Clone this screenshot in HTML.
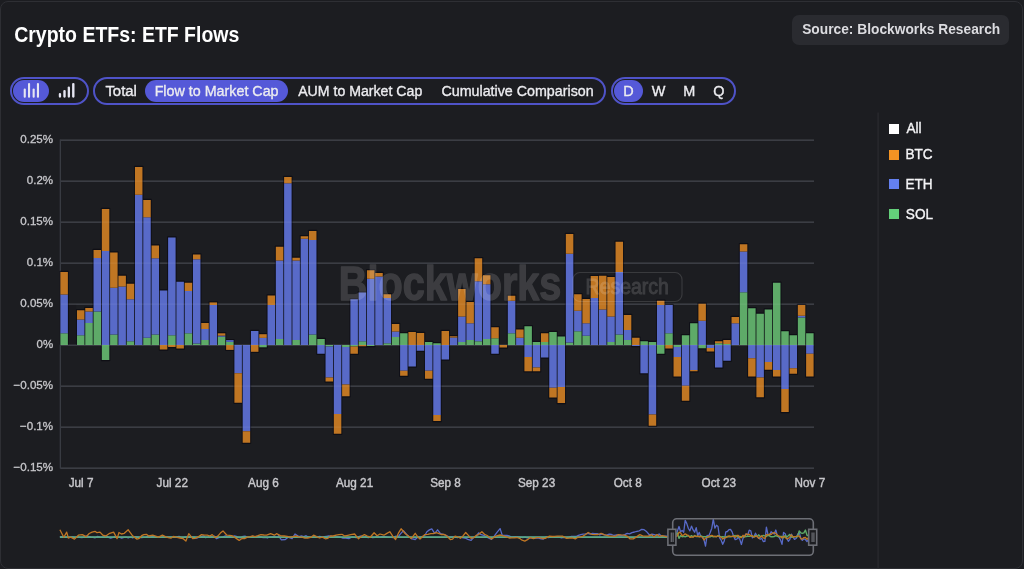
<!DOCTYPE html>
<html><head><meta charset="utf-8"><style>
*{margin:0;padding:0;box-sizing:border-box}
html,body{width:1024px;height:569px;background:#1c1d21;overflow:hidden;font-family:"Liberation Sans",sans-serif}
.card{position:absolute;left:0px;top:1px;width:1023px;height:568px;border:1px solid #2e2f34;border-radius:8px;background:#1c1d21}
.abs{position:absolute}
.src{left:791.7px;top:14.6px;width:217.3px;height:30.2px;border-radius:7px;background:#2a2b30}
.grp{position:absolute;top:77px;height:28px;border:2px solid #4f53c8;border-radius:14px}
.pill{position:absolute;top:80.4px;height:21.3px;border-radius:11px;background:#5559d8}
.lg{position:absolute;left:889px;width:10.3px;height:10px}
svg text{font-family:"Liberation Sans",sans-serif}
</style></head><body>
<div class="card"></div>
<div class="abs src"></div>

<div class="grp" style="left:10px;width:79px"></div>
<div class="pill" style="left:13px;width:36.3px"></div>
<div class="grp" style="left:93px;width:513px"></div>
<div class="pill" style="left:145.3px;width:142.6px"></div>
<div class="grp" style="left:611px;width:125px"></div>
<div class="pill" style="left:614px;width:29px"></div>

<div class="lg" style="top:123.5px;background:#ffffff"></div>
<div class="lg" style="top:149.8px;background:#f39323"></div>
<div class="lg" style="top:179.2px;background:#6480ef"></div>
<div class="lg" style="top:209px;background:#63cf7a"></div>

<svg class="abs" style="left:0;top:0;will-change:transform" width="1024" height="569">
<g fill="#e6e6f2"><rect x="23.7" y="88.6" width="2.1" height="9.2" rx="1"/><rect x="28.0" y="83" width="2.1" height="14.8" rx="1"/><rect x="32.6" y="88.6" width="2.1" height="9.2" rx="1"/><rect x="36.9" y="83" width="2.1" height="14.8" rx="1"/>
<rect x="58.8" y="92.9" width="2.3" height="4.8" rx="1.1"/><rect x="63.3" y="90.0" width="2.4" height="7.7" rx="1.1"/><rect x="67.7" y="86.5" width="2.3" height="11.2" rx="1.1"/><rect x="72.1" y="82.9" width="2.4" height="14.8" rx="1.1"/></g>
<text transform="translate(14.22,42.30) scale(0.8863,1)" font-size="22" font-weight="bold" fill="#ffffff">Crypto ETFs: ETF Flows</text><text transform="translate(802.19,34.20) scale(0.9247,1)" font-size="14.9" font-weight="bold" fill="#dcdcE0">Source: Blockworks Research</text><text transform="translate(105.38,95.80) scale(1.0026,1)" font-size="14.9" font-weight="normal" fill="#ececf0" stroke="#ececf0" stroke-width="0.35">Total</text><text transform="translate(154.63,95.80) scale(0.9604,1)" font-size="14.9" font-weight="normal" fill="#ececf0" stroke="#ececf0" stroke-width="0.35">Flow to Market Cap</text><text transform="translate(298.18,95.80) scale(0.9487,1)" font-size="14.9" font-weight="normal" fill="#ececf0" stroke="#ececf0" stroke-width="0.35">AUM to Market Cap</text><text transform="translate(441.46,95.80) scale(0.9579,1)" font-size="14.9" font-weight="normal" fill="#ececf0" stroke="#ececf0" stroke-width="0.35">Cumulative Comparison</text><text transform="translate(623.22,95.80) scale(0.9700,1)" font-size="14.9" font-weight="normal" fill="#ececf0" stroke="#ececf0" stroke-width="0.35">D</text><text transform="translate(651.85,95.80) scale(0.9700,1)" font-size="14.9" font-weight="normal" fill="#ececf0" stroke="#ececf0" stroke-width="0.35">W</text><text transform="translate(683.18,95.80) scale(0.9700,1)" font-size="14.9" font-weight="normal" fill="#ececf0" stroke="#ececf0" stroke-width="0.35">M</text><text transform="translate(713.27,95.80) scale(0.9700,1)" font-size="14.9" font-weight="normal" fill="#ececf0" stroke="#ececf0" stroke-width="0.35">Q</text><text transform="translate(20.29,143.10) scale(0.9907,1)" font-size="11.7" font-weight="normal" fill="#c8c8cc" stroke="#c8c8cc" stroke-width="0.3">0.25%</text><text transform="translate(26.79,184.10) scale(0.9884,1)" font-size="11.7" font-weight="normal" fill="#c8c8cc" stroke="#c8c8cc" stroke-width="0.3">0.2%</text><text transform="translate(20.29,225.10) scale(0.9907,1)" font-size="11.7" font-weight="normal" fill="#c8c8cc" stroke="#c8c8cc" stroke-width="0.3">0.15%</text><text transform="translate(26.79,266.10) scale(0.9884,1)" font-size="11.7" font-weight="normal" fill="#c8c8cc" stroke="#c8c8cc" stroke-width="0.3">0.1%</text><text transform="translate(20.29,307.10) scale(0.9907,1)" font-size="11.7" font-weight="normal" fill="#c8c8cc" stroke="#c8c8cc" stroke-width="0.3">0.05%</text><text transform="translate(36.56,348.10) scale(0.9813,1)" font-size="11.7" font-weight="normal" fill="#c8c8cc" stroke="#c8c8cc" stroke-width="0.3">0%</text><text transform="translate(13.45,389.10) scale(0.9923,1)" font-size="11.7" font-weight="normal" fill="#c8c8cc" stroke="#c8c8cc" stroke-width="0.3">−0.05%</text><text transform="translate(19.94,430.10) scale(0.9908,1)" font-size="11.7" font-weight="normal" fill="#c8c8cc" stroke="#c8c8cc" stroke-width="0.3">−0.1%</text><text transform="translate(13.45,471.10) scale(0.9923,1)" font-size="11.7" font-weight="normal" fill="#c8c8cc" stroke="#c8c8cc" stroke-width="0.3">−0.15%</text><text transform="translate(68.74,487.10) scale(0.9700,1)" font-size="12.1" font-weight="normal" fill="#c8c8cc" stroke="#c8c8cc" stroke-width="0.4">Jul 7</text><text transform="translate(156.62,487.10) scale(0.9700,1)" font-size="12.1" font-weight="normal" fill="#c8c8cc" stroke="#c8c8cc" stroke-width="0.4">Jul 22</text><text transform="translate(248.12,487.10) scale(0.9700,1)" font-size="12.1" font-weight="normal" fill="#c8c8cc" stroke="#c8c8cc" stroke-width="0.4">Aug 6</text><text transform="translate(336.00,487.10) scale(0.9700,1)" font-size="12.1" font-weight="normal" fill="#c8c8cc" stroke="#c8c8cc" stroke-width="0.4">Aug 21</text><text transform="translate(430.14,487.10) scale(0.9700,1)" font-size="12.1" font-weight="normal" fill="#c8c8cc" stroke="#c8c8cc" stroke-width="0.4">Sep 8</text><text transform="translate(518.00,487.10) scale(0.9700,1)" font-size="12.1" font-weight="normal" fill="#c8c8cc" stroke="#c8c8cc" stroke-width="0.4">Sep 23</text><text transform="translate(613.72,487.10) scale(0.9700,1)" font-size="12.1" font-weight="normal" fill="#c8c8cc" stroke="#c8c8cc" stroke-width="0.4">Oct 8</text><text transform="translate(701.60,487.10) scale(0.9700,1)" font-size="12.1" font-weight="normal" fill="#c8c8cc" stroke="#c8c8cc" stroke-width="0.4">Oct 23</text><text transform="translate(794.56,487.10) scale(0.9700,1)" font-size="12.1" font-weight="normal" fill="#c8c8cc" stroke="#c8c8cc" stroke-width="0.4">Nov 7</text><text transform="translate(906.47,133.30) scale(0.9400,1)" font-size="14.5" font-weight="normal" fill="#f4f4f6" stroke="#f4f4f6" stroke-width="0.35">All</text><text transform="translate(905.38,159.40) scale(0.9400,1)" font-size="14.5" font-weight="normal" fill="#f4f4f6" stroke="#f4f4f6" stroke-width="0.35">BTC</text><text transform="translate(905.38,188.90) scale(0.9400,1)" font-size="14.5" font-weight="normal" fill="#f4f4f6" stroke="#f4f4f6" stroke-width="0.35">ETH</text><text transform="translate(905.86,218.70) scale(0.9400,1)" font-size="14.5" font-weight="normal" fill="#f4f4f6" stroke="#f4f4f6" stroke-width="0.35">SOL</text>
<rect x="60" y="139.5" width="754" height="1.3" fill="#383b42"/><rect x="60" y="180.5" width="754" height="1.3" fill="#383b42"/><rect x="60" y="221.5" width="754" height="1.3" fill="#383b42"/><rect x="60" y="262.5" width="754" height="1.3" fill="#383b42"/><rect x="60" y="303.5" width="754" height="1.3" fill="#383b42"/><rect x="60" y="344.5" width="754" height="1.3" fill="#383b42"/><rect x="60" y="385.5" width="754" height="1.3" fill="#383b42"/><rect x="60" y="426.5" width="754" height="1.3" fill="#383b42"/><rect x="60" y="467.5" width="754" height="1.3" fill="#383b42"/><rect x="59.7" y="139.5" width="1.3" height="329" fill="#383b42"/>
<g fill="#0a0a12" opacity="0.7"><rect x="59.40" y="270.80" width="9.49" height="74.20" rx="0.8"/><rect x="75.97" y="309.05" width="9.49" height="35.95" rx="0.8"/><rect x="84.26" y="306.80" width="9.49" height="38.20" rx="0.8"/><rect x="92.54" y="248.80" width="9.49" height="96.20" rx="0.8"/><rect x="100.83" y="207.80" width="9.49" height="137.20" rx="0.8"/><rect x="100.83" y="345.00" width="9.49" height="16.20" rx="0.8"/><rect x="109.11" y="251.30" width="9.49" height="93.70" rx="0.8"/><rect x="117.40" y="274.55" width="9.49" height="70.45" rx="0.8"/><rect x="125.69" y="282.55" width="9.49" height="62.45" rx="0.8"/><rect x="133.97" y="165.80" width="9.49" height="179.20" rx="0.8"/><rect x="142.26" y="198.80" width="9.49" height="146.20" rx="0.8"/><rect x="150.54" y="244.30" width="9.49" height="100.70" rx="0.8"/><rect x="158.83" y="289.30" width="9.49" height="55.70" rx="0.8"/><rect x="158.83" y="345.00" width="9.49" height="5.70" rx="0.8"/><rect x="167.11" y="236.30" width="9.49" height="108.70" rx="0.8"/><rect x="167.11" y="345.00" width="9.49" height="3.20" rx="0.8"/><rect x="175.40" y="280.55" width="9.49" height="64.45" rx="0.8"/><rect x="175.40" y="345.00" width="9.49" height="4.70" rx="0.8"/><rect x="183.69" y="281.55" width="9.49" height="63.45" rx="0.8"/><rect x="191.97" y="253.30" width="9.49" height="91.70" rx="0.8"/><rect x="200.26" y="321.80" width="9.49" height="23.20" rx="0.8"/><rect x="208.54" y="301.20" width="9.49" height="43.80" rx="0.8"/><rect x="216.83" y="332.10" width="9.49" height="12.90" rx="0.8"/><rect x="225.11" y="338.90" width="9.49" height="6.10" rx="0.8"/><rect x="225.11" y="345.00" width="9.49" height="6.10" rx="0.8"/><rect x="233.40" y="345.00" width="9.49" height="58.95" rx="0.8"/><rect x="241.69" y="345.00" width="9.49" height="98.95" rx="0.8"/><rect x="249.97" y="329.80" width="9.49" height="15.20" rx="0.8"/><rect x="249.97" y="345.00" width="9.49" height="8.00" rx="0.8"/><rect x="258.26" y="333.00" width="9.49" height="12.00" rx="0.8"/><rect x="258.26" y="345.00" width="9.49" height="3.50" rx="0.8"/><rect x="266.54" y="294.30" width="9.49" height="50.70" rx="0.8"/><rect x="274.83" y="245.55" width="9.49" height="99.45" rx="0.8"/><rect x="283.11" y="175.80" width="9.49" height="169.20" rx="0.8"/><rect x="291.40" y="256.55" width="9.49" height="88.45" rx="0.8"/><rect x="299.69" y="235.05" width="9.49" height="109.95" rx="0.8"/><rect x="307.97" y="229.80" width="9.49" height="115.20" rx="0.8"/><rect x="316.26" y="337.80" width="9.49" height="7.20" rx="0.8"/><rect x="316.26" y="345.00" width="9.49" height="9.95" rx="0.8"/><rect x="324.54" y="345.00" width="9.49" height="37.70" rx="0.8"/><rect x="332.83" y="345.00" width="9.49" height="89.95" rx="0.8"/><rect x="341.11" y="345.00" width="9.49" height="52.45" rx="0.8"/><rect x="349.40" y="298.05" width="9.49" height="46.95" rx="0.8"/><rect x="349.40" y="345.00" width="9.49" height="9.95" rx="0.8"/><rect x="357.69" y="291.30" width="9.49" height="53.70" rx="0.8"/><rect x="357.69" y="345.00" width="9.49" height="2.45" rx="0.8"/><rect x="365.97" y="269.05" width="9.49" height="75.95" rx="0.8"/><rect x="365.97" y="345.00" width="9.49" height="2.20" rx="0.8"/><rect x="374.26" y="271.80" width="9.49" height="73.20" rx="0.8"/><rect x="382.54" y="293.05" width="9.49" height="51.95" rx="0.8"/><rect x="390.83" y="322.80" width="9.49" height="22.20" rx="0.8"/><rect x="399.11" y="332.05" width="9.49" height="12.95" rx="0.8"/><rect x="399.11" y="345.00" width="9.49" height="31.95" rx="0.8"/><rect x="407.40" y="330.80" width="9.49" height="14.20" rx="0.8"/><rect x="407.40" y="345.00" width="9.49" height="22.70" rx="0.8"/><rect x="415.69" y="331.80" width="9.49" height="13.20" rx="0.8"/><rect x="415.69" y="345.00" width="9.49" height="6.95" rx="0.8"/><rect x="423.97" y="340.80" width="9.49" height="4.20" rx="0.8"/><rect x="423.97" y="345.00" width="9.49" height="34.95" rx="0.8"/><rect x="432.26" y="342.05" width="9.49" height="2.95" rx="0.8"/><rect x="432.26" y="345.00" width="9.49" height="77.20" rx="0.8"/><rect x="440.54" y="329.80" width="9.49" height="15.20" rx="0.8"/><rect x="440.54" y="345.00" width="9.49" height="15.70" rx="0.8"/><rect x="448.83" y="335.05" width="9.49" height="9.95" rx="0.8"/><rect x="457.11" y="287.80" width="9.49" height="57.20" rx="0.8"/><rect x="465.40" y="300.80" width="9.49" height="44.20" rx="0.8"/><rect x="473.69" y="257.05" width="9.49" height="87.95" rx="0.8"/><rect x="481.97" y="274.05" width="9.49" height="70.95" rx="0.8"/><rect x="490.26" y="326.05" width="9.49" height="18.95" rx="0.8"/><rect x="490.26" y="345.00" width="9.49" height="9.95" rx="0.8"/><rect x="498.54" y="345.00" width="9.49" height="3.70" rx="0.8"/><rect x="506.83" y="294.55" width="9.49" height="50.45" rx="0.8"/><rect x="515.11" y="328.30" width="9.49" height="16.70" rx="0.8"/><rect x="523.40" y="325.05" width="9.49" height="19.95" rx="0.8"/><rect x="523.40" y="345.00" width="9.49" height="27.45" rx="0.8"/><rect x="531.69" y="340.80" width="9.49" height="4.20" rx="0.8"/><rect x="531.69" y="345.00" width="9.49" height="27.45" rx="0.8"/><rect x="539.97" y="332.05" width="9.49" height="12.95" rx="0.8"/><rect x="539.97" y="345.00" width="9.49" height="13.70" rx="0.8"/><rect x="548.26" y="330.80" width="9.49" height="14.20" rx="0.8"/><rect x="548.26" y="345.00" width="9.49" height="53.70" rx="0.8"/><rect x="556.54" y="335.30" width="9.49" height="9.70" rx="0.8"/><rect x="556.54" y="345.00" width="9.49" height="59.20" rx="0.8"/><rect x="564.83" y="232.80" width="9.49" height="112.20" rx="0.8"/><rect x="573.11" y="293.05" width="9.49" height="51.95" rx="0.8"/><rect x="581.40" y="297.80" width="9.49" height="47.20" rx="0.8"/><rect x="589.69" y="274.80" width="9.49" height="70.20" rx="0.8"/><rect x="597.97" y="274.55" width="9.49" height="70.45" rx="0.8"/><rect x="606.26" y="275.80" width="9.49" height="69.20" rx="0.8"/><rect x="614.54" y="240.55" width="9.49" height="104.45" rx="0.8"/><rect x="622.83" y="313.80" width="9.49" height="31.20" rx="0.8"/><rect x="631.11" y="336.55" width="9.49" height="8.45" rx="0.8"/><rect x="631.11" y="345.00" width="9.49" height="2.20" rx="0.8"/><rect x="639.40" y="340.05" width="9.49" height="4.95" rx="0.8"/><rect x="639.40" y="345.00" width="9.49" height="29.45" rx="0.8"/><rect x="647.69" y="340.80" width="9.49" height="4.20" rx="0.8"/><rect x="647.69" y="345.00" width="9.49" height="81.95" rx="0.8"/><rect x="655.97" y="299.55" width="9.49" height="45.45" rx="0.8"/><rect x="655.97" y="345.00" width="9.49" height="9.95" rx="0.8"/><rect x="664.26" y="303.80" width="9.49" height="41.20" rx="0.8"/><rect x="664.26" y="345.00" width="9.49" height="4.70" rx="0.8"/><rect x="672.54" y="345.00" width="9.49" height="32.70" rx="0.8"/><rect x="680.83" y="334.05" width="9.49" height="10.95" rx="0.8"/><rect x="680.83" y="345.00" width="9.49" height="56.95" rx="0.8"/><rect x="689.11" y="322.05" width="9.49" height="22.95" rx="0.8"/><rect x="689.11" y="345.00" width="9.49" height="27.45" rx="0.8"/><rect x="697.40" y="302.55" width="9.49" height="42.45" rx="0.8"/><rect x="697.40" y="345.00" width="9.49" height="4.45" rx="0.8"/><rect x="705.69" y="345.00" width="9.49" height="7.70" rx="0.8"/><rect x="713.97" y="340.05" width="9.49" height="4.95" rx="0.8"/><rect x="713.97" y="345.00" width="9.49" height="23.70" rx="0.8"/><rect x="722.26" y="338.80" width="9.49" height="6.20" rx="0.8"/><rect x="722.26" y="345.00" width="9.49" height="16.95" rx="0.8"/><rect x="730.54" y="315.80" width="9.49" height="29.20" rx="0.8"/><rect x="738.83" y="243.05" width="9.49" height="101.95" rx="0.8"/><rect x="747.11" y="307.05" width="9.49" height="37.95" rx="0.8"/><rect x="747.11" y="345.00" width="9.49" height="32.70" rx="0.8"/><rect x="755.40" y="312.55" width="9.49" height="32.45" rx="0.8"/><rect x="755.40" y="345.00" width="9.49" height="53.45" rx="0.8"/><rect x="763.69" y="308.30" width="9.49" height="36.70" rx="0.8"/><rect x="763.69" y="345.00" width="9.49" height="25.95" rx="0.8"/><rect x="771.97" y="281.55" width="9.49" height="63.45" rx="0.8"/><rect x="771.97" y="345.00" width="9.49" height="32.70" rx="0.8"/><rect x="780.26" y="330.05" width="9.49" height="14.95" rx="0.8"/><rect x="780.26" y="345.00" width="9.49" height="68.20" rx="0.8"/><rect x="788.54" y="334.05" width="9.49" height="10.95" rx="0.8"/><rect x="788.54" y="345.00" width="9.49" height="29.95" rx="0.8"/><rect x="796.83" y="303.80" width="9.49" height="41.20" rx="0.8"/><rect x="805.11" y="332.05" width="9.49" height="12.95" rx="0.8"/><rect x="805.11" y="345.00" width="9.49" height="32.70" rx="0.8"/><rect x="68.69" y="304.6" width="7.49" height="40.4" opacity="0.25"/></g><rect x="60.40" y="333.25" width="7.49" height="11.75" fill="#5eaa68"/><rect x="60.40" y="294.50" width="7.49" height="38.75" fill="#586ac8"/><rect x="60.40" y="272.00" width="7.49" height="22.50" fill="#c07623"/><rect x="76.97" y="335.25" width="7.49" height="9.75" fill="#5eaa68"/><rect x="76.97" y="319.50" width="7.49" height="15.75" fill="#586ac8"/><rect x="76.97" y="310.25" width="7.49" height="9.25" fill="#c07623"/><rect x="85.26" y="323.00" width="7.49" height="22.00" fill="#5eaa68"/><rect x="85.26" y="311.50" width="7.49" height="11.50" fill="#586ac8"/><rect x="85.26" y="308.00" width="7.49" height="3.50" fill="#c07623"/><rect x="93.54" y="311.50" width="7.49" height="33.50" fill="#5eaa68"/><rect x="93.54" y="258.00" width="7.49" height="53.50" fill="#586ac8"/><rect x="93.54" y="250.00" width="7.49" height="8.00" fill="#c07623"/><rect x="101.83" y="251.00" width="7.49" height="94.00" fill="#586ac8"/><rect x="101.83" y="209.00" width="7.49" height="42.00" fill="#c07623"/><rect x="101.83" y="345.00" width="7.49" height="15.00" fill="#5eaa68"/><rect x="110.11" y="334.50" width="7.49" height="10.50" fill="#5eaa68"/><rect x="110.11" y="287.75" width="7.49" height="46.75" fill="#586ac8"/><rect x="110.11" y="252.50" width="7.49" height="35.25" fill="#c07623"/><rect x="118.40" y="286.50" width="7.49" height="58.50" fill="#586ac8"/><rect x="118.40" y="275.75" width="7.49" height="10.75" fill="#c07623"/><rect x="126.69" y="341.25" width="7.49" height="3.75" fill="#5eaa68"/><rect x="126.69" y="299.25" width="7.49" height="42.00" fill="#586ac8"/><rect x="126.69" y="283.75" width="7.49" height="15.50" fill="#c07623"/><rect x="134.97" y="194.75" width="7.49" height="150.25" fill="#586ac8"/><rect x="134.97" y="167.00" width="7.49" height="27.75" fill="#c07623"/><rect x="143.26" y="337.75" width="7.49" height="7.25" fill="#5eaa68"/><rect x="143.26" y="217.25" width="7.49" height="120.50" fill="#586ac8"/><rect x="143.26" y="200.00" width="7.49" height="17.25" fill="#c07623"/><rect x="151.54" y="334.50" width="7.49" height="10.50" fill="#5eaa68"/><rect x="151.54" y="258.25" width="7.49" height="76.25" fill="#586ac8"/><rect x="151.54" y="245.50" width="7.49" height="12.75" fill="#c07623"/><rect x="159.83" y="290.50" width="7.49" height="54.50" fill="#586ac8"/><rect x="159.83" y="345.00" width="7.49" height="4.50" fill="#c07623"/><rect x="168.11" y="335.25" width="7.49" height="9.75" fill="#5eaa68"/><rect x="168.11" y="237.50" width="7.49" height="97.75" fill="#586ac8"/><rect x="168.11" y="345.00" width="7.49" height="2.00" fill="#c07623"/><rect x="176.40" y="281.75" width="7.49" height="63.25" fill="#586ac8"/><rect x="176.40" y="345.00" width="7.49" height="3.50" fill="#c07623"/><rect x="184.69" y="333.25" width="7.49" height="11.75" fill="#5eaa68"/><rect x="184.69" y="291.00" width="7.49" height="42.25" fill="#586ac8"/><rect x="184.69" y="282.75" width="7.49" height="8.25" fill="#c07623"/><rect x="192.97" y="343.50" width="7.49" height="1.50" fill="#5eaa68"/><rect x="192.97" y="259.25" width="7.49" height="84.25" fill="#586ac8"/><rect x="192.97" y="254.50" width="7.49" height="4.75" fill="#c07623"/><rect x="201.26" y="340.00" width="7.49" height="5.00" fill="#5eaa68"/><rect x="201.26" y="329.00" width="7.49" height="11.00" fill="#586ac8"/><rect x="201.26" y="323.00" width="7.49" height="6.00" fill="#c07623"/><rect x="209.54" y="305.00" width="7.49" height="40.00" fill="#586ac8"/><rect x="209.54" y="302.40" width="7.49" height="2.60" fill="#c07623"/><rect x="217.83" y="336.70" width="7.49" height="8.30" fill="#5eaa68"/><rect x="217.83" y="335.60" width="7.49" height="1.10" fill="#586ac8"/><rect x="217.83" y="333.30" width="7.49" height="2.30" fill="#c07623"/><rect x="226.11" y="341.90" width="7.49" height="3.10" fill="#5eaa68"/><rect x="226.11" y="340.10" width="7.49" height="1.80" fill="#586ac8"/><rect x="226.11" y="345.00" width="7.49" height="4.90" fill="#c07623"/><rect x="234.40" y="345.00" width="7.49" height="28.25" fill="#586ac8"/><rect x="234.40" y="373.25" width="7.49" height="29.50" fill="#c07623"/><rect x="242.69" y="345.00" width="7.49" height="86.25" fill="#586ac8"/><rect x="242.69" y="431.25" width="7.49" height="11.50" fill="#c07623"/><rect x="250.97" y="331.00" width="7.49" height="14.00" fill="#586ac8"/><rect x="250.97" y="345.00" width="7.49" height="6.80" fill="#c07623"/><rect x="259.26" y="337.90" width="7.49" height="7.10" fill="#586ac8"/><rect x="259.26" y="334.20" width="7.49" height="3.70" fill="#c07623"/><rect x="259.26" y="345.00" width="7.49" height="2.30" fill="#5eaa68"/><rect x="267.54" y="305.00" width="7.49" height="40.00" fill="#586ac8"/><rect x="267.54" y="295.50" width="7.49" height="9.50" fill="#c07623"/><rect x="275.83" y="339.00" width="7.49" height="6.00" fill="#5eaa68"/><rect x="275.83" y="260.50" width="7.49" height="78.50" fill="#586ac8"/><rect x="275.83" y="246.75" width="7.49" height="13.75" fill="#c07623"/><rect x="284.11" y="183.25" width="7.49" height="161.75" fill="#586ac8"/><rect x="284.11" y="177.00" width="7.49" height="6.25" fill="#c07623"/><rect x="292.40" y="340.00" width="7.49" height="5.00" fill="#5eaa68"/><rect x="292.40" y="260.50" width="7.49" height="79.50" fill="#586ac8"/><rect x="292.40" y="257.75" width="7.49" height="2.75" fill="#c07623"/><rect x="300.69" y="238.75" width="7.49" height="106.25" fill="#586ac8"/><rect x="300.69" y="236.25" width="7.49" height="2.50" fill="#c07623"/><rect x="308.97" y="334.50" width="7.49" height="10.50" fill="#5eaa68"/><rect x="308.97" y="240.00" width="7.49" height="94.50" fill="#586ac8"/><rect x="308.97" y="231.00" width="7.49" height="9.00" fill="#c07623"/><rect x="317.26" y="339.00" width="7.49" height="6.00" fill="#5eaa68"/><rect x="317.26" y="345.00" width="7.49" height="8.75" fill="#586ac8"/><rect x="325.54" y="345.00" width="7.49" height="1.50" fill="#5eaa68"/><rect x="325.54" y="346.50" width="7.49" height="31.00" fill="#586ac8"/><rect x="325.54" y="377.50" width="7.49" height="4.00" fill="#c07623"/><rect x="333.83" y="345.00" width="7.49" height="69.00" fill="#586ac8"/><rect x="333.83" y="414.00" width="7.49" height="19.75" fill="#c07623"/><rect x="342.11" y="345.00" width="7.49" height="2.00" fill="#5eaa68"/><rect x="342.11" y="347.00" width="7.49" height="37.50" fill="#586ac8"/><rect x="342.11" y="384.50" width="7.49" height="11.75" fill="#c07623"/><rect x="350.40" y="299.25" width="7.49" height="45.75" fill="#586ac8"/><rect x="350.40" y="345.00" width="7.49" height="1.50" fill="#5eaa68"/><rect x="350.40" y="346.50" width="7.49" height="7.25" fill="#c07623"/><rect x="358.69" y="341.25" width="7.49" height="3.75" fill="#5eaa68"/><rect x="358.69" y="292.50" width="7.49" height="48.75" fill="#586ac8"/><rect x="358.69" y="345.00" width="7.49" height="1.25" fill="#c07623"/><rect x="366.97" y="278.75" width="7.49" height="66.25" fill="#586ac8"/><rect x="366.97" y="270.25" width="7.49" height="8.50" fill="#c07623"/><rect x="366.97" y="345.00" width="7.49" height="1.00" fill="#5eaa68"/><rect x="375.26" y="276.50" width="7.49" height="68.50" fill="#586ac8"/><rect x="375.26" y="273.00" width="7.49" height="3.50" fill="#c07623"/><rect x="383.54" y="343.25" width="7.49" height="1.75" fill="#5eaa68"/><rect x="383.54" y="298.00" width="7.49" height="45.25" fill="#586ac8"/><rect x="383.54" y="294.25" width="7.49" height="3.75" fill="#c07623"/><rect x="391.83" y="337.00" width="7.49" height="8.00" fill="#5eaa68"/><rect x="391.83" y="331.50" width="7.49" height="5.50" fill="#586ac8"/><rect x="391.83" y="324.00" width="7.49" height="7.50" fill="#c07623"/><rect x="400.11" y="333.25" width="7.49" height="11.75" fill="#5eaa68"/><rect x="400.11" y="345.00" width="7.49" height="25.75" fill="#586ac8"/><rect x="400.11" y="370.75" width="7.49" height="5.00" fill="#c07623"/><rect x="408.40" y="332.00" width="7.49" height="13.00" fill="#c07623"/><rect x="408.40" y="345.00" width="7.49" height="21.50" fill="#586ac8"/><rect x="416.69" y="333.00" width="7.49" height="12.00" fill="#c07623"/><rect x="416.69" y="345.00" width="7.49" height="5.75" fill="#586ac8"/><rect x="424.97" y="342.00" width="7.49" height="3.00" fill="#5eaa68"/><rect x="424.97" y="345.00" width="7.49" height="25.75" fill="#586ac8"/><rect x="424.97" y="370.75" width="7.49" height="8.00" fill="#c07623"/><rect x="433.26" y="343.25" width="7.49" height="1.75" fill="#5eaa68"/><rect x="433.26" y="345.00" width="7.49" height="70.00" fill="#586ac8"/><rect x="433.26" y="415.00" width="7.49" height="6.00" fill="#c07623"/><rect x="441.54" y="331.00" width="7.49" height="14.00" fill="#c07623"/><rect x="441.54" y="345.00" width="7.49" height="14.50" fill="#586ac8"/><rect x="449.83" y="337.50" width="7.49" height="7.50" fill="#586ac8"/><rect x="449.83" y="336.25" width="7.49" height="1.25" fill="#c07623"/><rect x="458.11" y="342.00" width="7.49" height="3.00" fill="#5eaa68"/><rect x="458.11" y="316.50" width="7.49" height="25.50" fill="#586ac8"/><rect x="458.11" y="289.00" width="7.49" height="27.50" fill="#c07623"/><rect x="466.40" y="340.00" width="7.49" height="5.00" fill="#5eaa68"/><rect x="466.40" y="323.25" width="7.49" height="16.75" fill="#586ac8"/><rect x="466.40" y="302.00" width="7.49" height="21.25" fill="#c07623"/><rect x="474.69" y="341.25" width="7.49" height="3.75" fill="#5eaa68"/><rect x="474.69" y="281.25" width="7.49" height="60.00" fill="#586ac8"/><rect x="474.69" y="258.25" width="7.49" height="23.00" fill="#c07623"/><rect x="482.97" y="339.00" width="7.49" height="6.00" fill="#5eaa68"/><rect x="482.97" y="284.25" width="7.49" height="54.75" fill="#586ac8"/><rect x="482.97" y="275.25" width="7.49" height="9.00" fill="#c07623"/><rect x="491.26" y="338.25" width="7.49" height="6.75" fill="#5eaa68"/><rect x="491.26" y="327.25" width="7.49" height="11.00" fill="#c07623"/><rect x="491.26" y="345.00" width="7.49" height="8.75" fill="#586ac8"/><rect x="499.54" y="345.00" width="7.49" height="2.50" fill="#c07623"/><rect x="507.83" y="333.25" width="7.49" height="11.75" fill="#5eaa68"/><rect x="507.83" y="300.75" width="7.49" height="32.50" fill="#586ac8"/><rect x="507.83" y="295.75" width="7.49" height="5.00" fill="#c07623"/><rect x="516.11" y="337.75" width="7.49" height="7.25" fill="#586ac8"/><rect x="516.11" y="329.50" width="7.49" height="8.25" fill="#c07623"/><rect x="524.40" y="326.25" width="7.49" height="18.75" fill="#5eaa68"/><rect x="524.40" y="345.00" width="7.49" height="12.00" fill="#586ac8"/><rect x="524.40" y="357.00" width="7.49" height="14.25" fill="#c07623"/><rect x="532.69" y="342.00" width="7.49" height="3.00" fill="#5eaa68"/><rect x="532.69" y="345.00" width="7.49" height="22.50" fill="#586ac8"/><rect x="532.69" y="367.50" width="7.49" height="3.75" fill="#c07623"/><rect x="540.97" y="342.00" width="7.49" height="3.00" fill="#5eaa68"/><rect x="540.97" y="333.25" width="7.49" height="8.75" fill="#c07623"/><rect x="540.97" y="345.00" width="7.49" height="12.50" fill="#586ac8"/><rect x="549.26" y="332.00" width="7.49" height="13.00" fill="#5eaa68"/><rect x="549.26" y="345.00" width="7.49" height="42.75" fill="#586ac8"/><rect x="549.26" y="387.75" width="7.49" height="9.75" fill="#c07623"/><rect x="557.54" y="336.50" width="7.49" height="8.50" fill="#5eaa68"/><rect x="557.54" y="345.00" width="7.49" height="42.00" fill="#586ac8"/><rect x="557.54" y="387.00" width="7.49" height="16.00" fill="#c07623"/><rect x="565.83" y="342.50" width="7.49" height="2.50" fill="#5eaa68"/><rect x="565.83" y="253.75" width="7.49" height="88.75" fill="#586ac8"/><rect x="565.83" y="234.00" width="7.49" height="19.75" fill="#c07623"/><rect x="574.11" y="331.25" width="7.49" height="13.75" fill="#5eaa68"/><rect x="574.11" y="310.75" width="7.49" height="20.50" fill="#586ac8"/><rect x="574.11" y="294.25" width="7.49" height="16.50" fill="#c07623"/><rect x="582.40" y="335.75" width="7.49" height="9.25" fill="#5eaa68"/><rect x="582.40" y="323.25" width="7.49" height="12.50" fill="#586ac8"/><rect x="582.40" y="299.00" width="7.49" height="24.25" fill="#c07623"/><rect x="590.69" y="298.00" width="7.49" height="47.00" fill="#586ac8"/><rect x="590.69" y="276.00" width="7.49" height="22.00" fill="#c07623"/><rect x="598.97" y="309.50" width="7.49" height="35.50" fill="#586ac8"/><rect x="598.97" y="275.75" width="7.49" height="33.75" fill="#c07623"/><rect x="607.26" y="342.00" width="7.49" height="3.00" fill="#5eaa68"/><rect x="607.26" y="316.50" width="7.49" height="25.50" fill="#586ac8"/><rect x="607.26" y="277.00" width="7.49" height="39.50" fill="#c07623"/><rect x="615.54" y="334.50" width="7.49" height="10.50" fill="#5eaa68"/><rect x="615.54" y="272.00" width="7.49" height="62.50" fill="#586ac8"/><rect x="615.54" y="241.75" width="7.49" height="30.25" fill="#c07623"/><rect x="623.83" y="340.00" width="7.49" height="5.00" fill="#5eaa68"/><rect x="623.83" y="330.00" width="7.49" height="10.00" fill="#586ac8"/><rect x="623.83" y="315.00" width="7.49" height="15.00" fill="#c07623"/><rect x="632.11" y="337.75" width="7.49" height="7.25" fill="#c07623"/><rect x="632.11" y="345.00" width="7.49" height="1.00" fill="#586ac8"/><rect x="640.40" y="341.25" width="7.49" height="3.75" fill="#5eaa68"/><rect x="640.40" y="345.00" width="7.49" height="28.25" fill="#586ac8"/><rect x="648.69" y="342.00" width="7.49" height="3.00" fill="#5eaa68"/><rect x="648.69" y="345.00" width="7.49" height="69.50" fill="#586ac8"/><rect x="648.69" y="414.50" width="7.49" height="11.25" fill="#c07623"/><rect x="656.97" y="305.00" width="7.49" height="40.00" fill="#586ac8"/><rect x="656.97" y="300.75" width="7.49" height="4.25" fill="#c07623"/><rect x="656.97" y="345.00" width="7.49" height="8.75" fill="#5eaa68"/><rect x="665.26" y="333.25" width="7.49" height="11.75" fill="#5eaa68"/><rect x="665.26" y="305.00" width="7.49" height="28.25" fill="#586ac8"/><rect x="665.26" y="345.00" width="7.49" height="3.50" fill="#c07623"/><rect x="673.54" y="345.00" width="7.49" height="2.00" fill="#5eaa68"/><rect x="673.54" y="347.00" width="7.49" height="10.00" fill="#586ac8"/><rect x="673.54" y="357.00" width="7.49" height="19.50" fill="#c07623"/><rect x="681.83" y="335.25" width="7.49" height="9.75" fill="#5eaa68"/><rect x="681.83" y="345.00" width="7.49" height="40.75" fill="#586ac8"/><rect x="681.83" y="385.75" width="7.49" height="15.00" fill="#c07623"/><rect x="690.11" y="323.25" width="7.49" height="21.75" fill="#5eaa68"/><rect x="690.11" y="345.00" width="7.49" height="25.00" fill="#586ac8"/><rect x="690.11" y="370.00" width="7.49" height="1.25" fill="#c07623"/><rect x="698.40" y="320.75" width="7.49" height="24.25" fill="#586ac8"/><rect x="698.40" y="303.75" width="7.49" height="17.00" fill="#c07623"/><rect x="698.40" y="345.00" width="7.49" height="3.25" fill="#5eaa68"/><rect x="706.69" y="345.00" width="7.49" height="3.00" fill="#586ac8"/><rect x="706.69" y="348.00" width="7.49" height="3.50" fill="#c07623"/><rect x="714.97" y="343.25" width="7.49" height="1.75" fill="#5eaa68"/><rect x="714.97" y="341.25" width="7.49" height="2.00" fill="#c07623"/><rect x="714.97" y="345.00" width="7.49" height="22.50" fill="#586ac8"/><rect x="723.26" y="344.00" width="7.49" height="1.00" fill="#5eaa68"/><rect x="723.26" y="340.00" width="7.49" height="4.00" fill="#c07623"/><rect x="723.26" y="345.00" width="7.49" height="15.75" fill="#586ac8"/><rect x="731.54" y="323.25" width="7.49" height="21.75" fill="#586ac8"/><rect x="731.54" y="317.00" width="7.49" height="6.25" fill="#c07623"/><rect x="739.83" y="292.25" width="7.49" height="52.75" fill="#5eaa68"/><rect x="739.83" y="251.50" width="7.49" height="40.75" fill="#586ac8"/><rect x="739.83" y="244.25" width="7.49" height="7.25" fill="#c07623"/><rect x="748.11" y="308.25" width="7.49" height="36.75" fill="#5eaa68"/><rect x="748.11" y="345.00" width="7.49" height="13.25" fill="#586ac8"/><rect x="748.11" y="358.25" width="7.49" height="18.25" fill="#c07623"/><rect x="756.40" y="313.75" width="7.49" height="31.25" fill="#5eaa68"/><rect x="756.40" y="345.00" width="7.49" height="32.50" fill="#586ac8"/><rect x="756.40" y="377.50" width="7.49" height="19.75" fill="#c07623"/><rect x="764.69" y="309.50" width="7.49" height="35.50" fill="#5eaa68"/><rect x="764.69" y="345.00" width="7.49" height="17.00" fill="#586ac8"/><rect x="764.69" y="362.00" width="7.49" height="7.75" fill="#c07623"/><rect x="772.97" y="282.75" width="7.49" height="62.25" fill="#5eaa68"/><rect x="772.97" y="345.00" width="7.49" height="25.00" fill="#586ac8"/><rect x="772.97" y="370.00" width="7.49" height="6.50" fill="#c07623"/><rect x="781.26" y="331.25" width="7.49" height="13.75" fill="#5eaa68"/><rect x="781.26" y="345.00" width="7.49" height="44.00" fill="#586ac8"/><rect x="781.26" y="389.00" width="7.49" height="23.00" fill="#c07623"/><rect x="789.54" y="335.25" width="7.49" height="9.75" fill="#5eaa68"/><rect x="789.54" y="345.00" width="7.49" height="23.25" fill="#586ac8"/><rect x="789.54" y="368.25" width="7.49" height="5.50" fill="#c07623"/><rect x="797.83" y="317.50" width="7.49" height="27.50" fill="#5eaa68"/><rect x="797.83" y="315.75" width="7.49" height="1.75" fill="#586ac8"/><rect x="797.83" y="305.00" width="7.49" height="10.75" fill="#c07623"/><rect x="806.11" y="333.25" width="7.49" height="11.75" fill="#5eaa68"/><rect x="806.11" y="345.00" width="7.49" height="8.75" fill="#586ac8"/><rect x="806.11" y="353.75" width="7.49" height="22.75" fill="#c07623"/>
<g fill="#ffffff" opacity="0.055"><rect x="61" y="139.5" width="753" height="1.3"/><rect x="61" y="180.5" width="753" height="1.3"/><rect x="61" y="221.5" width="753" height="1.3"/><rect x="61" y="262.5" width="753" height="1.3"/><rect x="61" y="303.5" width="753" height="1.3"/><rect x="61" y="344.5" width="753" height="1.3"/><rect x="61" y="385.5" width="753" height="1.3"/><rect x="61" y="426.5" width="753" height="1.3"/><rect x="61" y="467.5" width="753" height="1.3"/></g>
<g opacity="0.14" stroke-linejoin="round"><text transform="translate(338.87,300.40) scale(0.8261,1)" font-size="48.0" font-weight="bold" fill="#ffffff" stroke="#ffffff" stroke-width="1.3">Blockworks</text></g>
<rect x="573" y="272.5" width="109" height="29" rx="7" fill="none" stroke="#ffffff" stroke-opacity="0.13" stroke-width="1.2"/>
<g opacity="0.14"><text transform="translate(585.59,293.70) scale(0.9172,1)" font-size="21.2" font-weight="normal" fill="#ffffff" stroke="#ffffff" stroke-width="0.9">Research</text></g>
<path d="M59.9,537.0 L62.1,536.6 L64.3,536.9 L66.5,537.2 L68.7,537.6 L70.9,537.4 L73.1,537.0 L75.3,537.7 L77.6,536.6 L79.8,537.4 L82.0,537.6 L84.2,536.9 L86.4,536.1 L88.6,536.5 L90.8,537.1 L93.0,537.3 L95.2,537.8 L97.4,536.5 L99.6,537.0 L101.8,537.3 L104.0,536.9 L106.2,535.8 L108.5,537.4 L110.7,538.2 L112.9,537.5 L115.1,536.5 L117.3,536.8 L119.5,537.1 L121.7,538.2 L123.9,537.3 L126.1,537.1 L128.3,537.8 L130.5,537.0 L132.7,537.9 L134.9,536.7 L137.1,536.8 L139.4,537.4 L141.6,537.7 L143.8,537.3 L146.0,537.2 L148.2,536.1 L150.4,536.6 L152.6,536.7 L154.8,536.7 L157.0,537.3 L159.2,536.8 L161.4,537.4 L163.6,537.0 L165.8,536.8 L168.0,537.1 L170.3,537.2 L172.5,537.4 L174.7,536.8 L176.9,536.9 L179.1,536.3 L181.3,537.8 L183.5,537.7 L185.7,536.9 L187.9,536.8 L190.1,536.4 L192.3,537.1 L194.5,537.1 L196.7,538.1 L198.9,537.1 L201.2,536.6 L203.4,535.8 L205.6,537.7 L207.8,537.1 L210.0,536.2 L212.2,537.1 L214.4,536.2 L216.6,538.7 L218.8,537.6 L221.0,537.3 L223.2,536.9 L225.4,535.9 L227.6,536.9 L229.8,536.2 L232.1,537.3 L234.3,535.9 L236.5,536.5 L238.7,537.6 L240.9,537.8 L243.1,536.4 L245.3,536.2 L247.5,537.4 L249.7,537.4 L251.9,536.5 L254.1,536.7 L256.3,536.7 L258.5,536.4 L260.7,536.7 L263.0,537.6 L265.2,537.3 L267.4,538.0 L269.6,537.0 L271.8,536.9 L274.0,536.5 L276.2,536.9 L278.4,537.0 L278.4,535.6 L281.4,539.9 L285.3,539.5 L288.2,537.2 L292.1,538.6 L295.0,534.0 L298.9,536.6 L301.4,535.9 L303.8,536.6 L306.1,535.7 L308.3,537.0 L310.6,537.4 L312.9,537.1 L315.1,537.4 L317.4,536.9 L319.6,536.4 L321.9,536.8 L324.2,536.6 L326.4,536.3 L328.7,536.0 L330.9,536.2 L333.2,536.9 L335.5,537.0 L337.7,536.7 L340.0,537.0 L342.9,538.2 L345.8,538.2 L348.8,538.6 L352.0,537.0 L354.3,537.3 L356.6,537.6 L358.9,536.6 L361.2,536.0 L363.5,537.4 L365.8,536.7 L368.1,537.7 L370.4,537.2 L372.7,537.5 L375.0,537.4 L377.3,536.0 L379.6,537.4 L381.9,536.7 L384.2,536.6 L386.5,536.8 L388.8,537.4 L391.1,537.4 L393.4,537.5 L395.7,536.2 L398.0,537.0 L400.7,533.6 L403.4,530.7 L407.3,535.2 L411.3,538.6 L415.2,539.5 L417.6,537.2 L420.0,537.3 L422.5,536.6 L424.9,535.2 L426.9,531.7 L429.4,529.9 L431.8,528.8 L434.7,533.3 L437.6,529.8 L440.5,533.7 L444.4,534.6 L448.3,536.6 L450.5,536.9 L452.8,537.0 L455.0,537.0 L457.3,537.7 L459.7,536.9 L462.0,537.5 L464.9,538.0 L467.9,539.3 L471.1,540.4 L473.6,537.5 L476.1,536.3 L478.6,532.9 L481.2,534.7 L483.8,535.4 L486.3,536.9 L488.9,538.1 L491.5,539.3 L494.4,535.8 L497.2,532.1 L500.1,528.6 L502.3,535.5 L504.6,535.5 L506.9,535.3 L509.1,535.8 L511.4,537.1 L513.7,536.8 L516.0,536.7 L518.2,536.8 L520.5,537.1 L522.8,537.5 L525.1,537.2 L527.3,537.8 L529.6,538.0 L531.9,537.7 L534.2,537.9 L536.4,538.0 L538.7,538.2 L541.0,538.9 L543.5,539.0 L546.0,537.0 L548.5,537.7 L551.0,537.2 L553.5,536.8 L556.0,536.8 L558.7,537.0 L561.4,537.8 L564.0,537.4 L566.7,537.6 L569.0,537.1 L571.4,536.5 L573.7,536.4 L576.1,536.5 L578.4,535.4 L580.8,534.7 L583.1,534.2 L585.5,533.9 L587.8,533.4 L590.2,534.2 L592.5,533.3 L594.9,533.7 L597.3,533.7 L599.7,534.8 L602.1,533.9 L604.4,534.9 L606.8,535.2 L609.2,534.2 L611.6,534.5 L614.0,535.5 L616.7,534.8 L619.4,535.5 L622.1,535.5 L624.8,534.6 L627.2,533.4 L629.6,533.9 L632.0,532.6 L634.5,532.0 L636.9,531.3 L639.3,530.8 L641.7,529.4 L644.1,529.7 L646.8,531.8 L649.5,535.0 L651.9,534.1 L654.3,534.7 L656.7,535.3 L659.1,534.0 L661.8,536.4 L664.5,536.1 L667.2,536.1 L670.0,535.5 L672.7,536.5 L671.2,532.6 L672.8,536.8 L674.3,535.1 L675.9,535.5 L677.4,531.0 L679.0,526.5 L680.6,531.7 L682.1,530.4 L683.7,532.2 L685.2,520.4 L686.8,523.6 L688.4,528.5 L689.9,530.8 L691.5,526.1 L693.1,529.9 L694.6,532.2 L696.2,527.6 L697.7,535.6 L699.3,532.4 L700.9,536.7 L702.4,536.6 L704.0,539.9 L705.5,546.2 L707.1,535.3 L708.7,536.0 L710.2,532.4 L711.8,528.2 L713.3,519.1 L714.9,528.1 L716.5,525.2 L718.0,526.5 L719.6,537.8 L721.2,540.2 L722.7,544.3 L724.3,540.9 L725.8,531.8 L727.4,531.5 L729.0,529.6 L730.5,529.3 L732.1,531.9 L733.6,536.2 L735.2,539.6 L736.8,539.2 L738.3,537.4 L739.9,539.6 L741.4,544.5 L743.0,538.4 L744.6,536.0 L746.1,534.0 L747.7,535.0 L749.2,530.2 L750.8,530.8 L752.4,537.8 L753.9,536.8 L755.5,533.2 L757.1,536.0 L758.6,538.1 L760.2,539.3 L761.7,538.2 L763.3,541.5 L764.9,541.4 L766.4,527.1 L768.0,534.6 L769.5,535.4 L771.1,531.7 L772.7,532.9 L774.2,534.0 L775.8,530.0 L777.3,535.7 L778.9,536.9 L780.5,539.9 L782.0,544.4 L783.6,532.4 L785.2,533.7 L786.7,537.9 L788.3,541.3 L789.8,539.5 L791.4,534.1 L793.0,537.1 L794.5,539.3 L796.1,538.5 L797.6,534.4 L799.2,532.3 L800.8,538.2 L802.3,540.4 L803.9,538.7 L805.4,539.5 L807.0,541.6 L808.6,539.3 L810.1,536.6 L811.7,537.8" stroke="#586ac8" stroke-width="1.3" fill="none" stroke-linejoin="round"/><path d="M59.9,537.2 L672.7,537.2 L671.2,535.5 L672.8,536.8 L674.3,535.7 L675.9,534.4 L677.4,533.1 L679.0,538.4 L680.6,535.7 L682.1,536.8 L683.7,536.4 L685.2,536.8 L686.8,536.0 L688.4,535.7 L689.9,536.8 L691.5,535.7 L693.1,536.8 L694.6,535.5 L696.2,536.6 L697.7,536.3 L699.3,536.8 L700.9,535.9 L702.4,536.5 L704.0,536.8 L705.5,536.8 L707.1,536.8 L708.7,537.1 L710.2,536.8 L711.8,536.1 L713.3,536.8 L714.9,536.3 L716.5,536.8 L718.0,535.7 L719.6,536.1 L721.2,537.0 L722.7,536.8 L724.3,537.0 L725.8,537.0 L727.4,536.4 L729.0,536.9 L730.5,536.8 L732.1,536.6 L733.6,535.9 L735.2,535.5 L736.8,536.8 L738.3,536.8 L739.9,536.5 L741.4,536.6 L743.0,536.8 L744.6,536.8 L746.1,536.5 L747.7,536.3 L749.2,536.4 L750.8,536.1 L752.4,536.1 L753.9,536.8 L755.5,535.5 L757.1,536.8 L758.6,534.8 L760.2,536.5 L761.7,536.5 L763.3,535.4 L764.9,535.9 L766.4,536.5 L768.0,535.3 L769.5,535.8 L771.1,536.8 L772.7,536.8 L774.2,536.5 L775.8,535.7 L777.3,536.3 L778.9,536.8 L780.5,536.4 L782.0,536.5 L783.6,537.8 L785.2,535.5 L786.7,537.0 L788.3,535.7 L789.8,534.4 L791.4,537.2 L793.0,536.8 L794.5,536.6 L796.1,536.7 L797.6,536.8 L799.2,531.0 L800.8,532.8 L802.3,533.4 L803.9,532.9 L805.4,530.0 L807.0,535.3 L808.6,535.7 L810.1,533.8 L811.7,535.5" stroke="#5eaa68" stroke-width="1.4" fill="none" stroke-linejoin="round"/><path d="M59.9,536.9 L672.7,536.9" stroke="#5aa596" stroke-width="1.5" fill="none" opacity="0.85"/><path d="M59.9,529.8 L63.8,537.2 L66.7,532.1 L68.3,538.0 L70.6,537.2 L74.5,539.1 L78.4,535.2 L82.3,534.6 L86.2,536.6 L89.2,533.5 L92.1,532.1 L95.0,531.3 L97.0,532.7 L100.0,532.1 L102.9,535.2 L105.8,536.0 L109.7,533.3 L113.6,532.1 L117.1,538.6 L119.0,532.5 L121.4,534.0 L124.3,533.3 L128.2,529.8 L132.1,535.2 L134.6,537.4 L137.0,539.1 L139.3,538.3 L141.6,535.7 L143.9,534.6 L146.4,534.4 L148.8,536.0 L152.7,535.2 L155.6,536.2 L158.5,537.2 L162.4,535.2 L165.4,536.7 L168.3,537.6 L170.9,538.2 L173.5,536.5 L176.1,537.2 L180.0,538.0 L182.9,538.6 L185.9,541.1 L188.8,533.7 L192.7,538.6 L195.1,538.4 L197.6,537.2 L201.5,534.6 L204.4,535.2 L207.3,535.2 L209.8,536.0 L212.2,534.6 L215.2,537.6 L217.8,536.1 L220.4,533.1 L223.0,530.9 L226.9,535.2 L229.8,535.4 L232.7,536.0 L236.6,538.6 L239.2,540.4 L241.9,538.4 L244.5,538.6 L247.4,537.1 L250.3,536.6 L252.7,535.8 L255.0,536.6 L257.9,535.7 L260.9,534.6 L263.8,535.0 L266.7,535.2 L270.6,533.7 L274.5,535.2 L276.5,533.7 L280.4,535.6 L284.3,536.0 L287.2,536.4 L290.2,537.2 L293.1,536.6 L296.0,536.0 L298.9,536.8 L301.9,537.2 L304.8,538.1 L307.7,538.0 L310.6,537.4 L313.6,535.2 L316.6,536.7 L319.5,538.0 L322.4,537.1 L325.3,538.8 L327.9,538.4 L330.5,535.9 L333.1,536.0 L336.1,535.2 L339.0,534.6 L341.9,534.3 L344.8,536.0 L347.8,535.3 L350.7,534.6 L354.6,534.0 L358.5,538.8 L361.4,536.2 L364.4,534.6 L367.3,536.0 L370.2,537.2 L374.1,532.7 L377.1,535.7 L380.0,534.0 L383.9,535.2 L386.9,533.4 L389.8,531.7 L392.7,536.2 L395.6,539.5 L398.4,533.2 L401.1,528.8 L405.4,533.7 L408.4,535.9 L411.3,538.6 L415.2,533.3 L417.6,536.7 L420.0,539.1 L422.4,536.8 L424.9,534.6 L427.9,534.4 L430.8,533.7 L433.4,533.6 L436.0,532.7 L438.6,533.3 L441.2,534.5 L443.8,534.3 L446.4,535.6 L450.3,539.5 L452.6,539.1 L455.0,536.1 L457.7,536.8 L460.4,538.3 L463.0,535.9 L465.7,532.5 L468.4,535.4 L471.1,538.3 L473.6,537.7 L476.1,535.4 L478.6,534.6 L481.9,531.8 L484.5,534.3 L487.2,535.5 L491.5,539.0 L495.8,536.1 L500.1,535.0 L503.4,535.8 L506.6,536.8 L509.2,538.0 L511.8,537.8 L514.3,537.8 L516.9,537.5 L519.5,538.3 L522.1,540.2 L524.8,541.1 L527.5,539.7 L530.2,537.6 L533.5,538.7 L536.7,537.6 L539.5,537.6 L542.4,538.5 L545.2,538.3 L549.5,536.1 L552.1,536.5 L554.7,536.3 L557.2,536.2 L559.8,536.2 L562.4,536.1 L566.7,538.3 L569.6,538.1 L572.4,538.0 L575.3,538.9 L577.9,537.3 L580.5,536.8 L583.0,536.1 L585.6,534.5 L588.2,532.5 L591.5,534.3 L594.7,534.6 L597.9,534.5 L601.1,533.3 L604.0,534.7 L606.8,535.3 L609.7,536.1 L612.6,536.1 L615.4,536.3 L618.3,534.6 L621.2,534.9 L624.0,535.1 L626.9,536.1 L630.1,538.9 L633.3,538.9 L636.5,536.9 L639.8,534.6 L642.7,535.8 L645.5,536.2 L648.4,536.1 L651.3,534.8 L654.1,536.8 L657.0,534.6 L659.5,536.3 L662.0,535.7 L664.5,536.1 L667.2,536.8 L670.0,536.5 L672.7,536.5 L671.2,534.3 L672.8,536.8 L674.3,535.8 L675.9,536.4 L677.4,535.9 L679.0,532.2 L680.6,532.9 L682.1,535.6 L683.7,535.1 L685.2,533.8 L686.8,534.9 L688.4,535.4 L689.9,537.3 L691.5,537.0 L693.1,537.2 L694.6,535.9 L696.2,536.3 L697.7,536.1 L699.3,536.5 L700.9,536.5 L702.4,537.3 L704.0,540.0 L705.5,538.1 L707.1,537.5 L708.7,536.4 L710.2,535.8 L711.8,535.3 L713.3,536.1 L714.9,536.5 L716.5,536.5 L718.0,535.8 L719.6,536.8 L721.2,537.2 L722.7,539.0 L724.3,538.1 L725.8,537.6 L727.4,536.9 L729.0,535.9 L730.5,536.4 L732.1,536.4 L733.6,536.0 L735.2,537.3 L736.8,535.4 L738.3,535.5 L739.9,537.7 L741.4,537.5 L743.0,535.3 L744.6,536.7 L746.1,533.8 L747.7,534.5 L749.2,534.3 L750.8,535.8 L752.4,535.6 L753.9,537.1 L755.5,536.3 L757.1,535.9 L758.6,538.4 L760.2,537.2 L761.7,535.8 L763.3,537.9 L764.9,538.5 L766.4,534.6 L768.0,535.0 L769.5,534.1 L771.1,534.4 L772.7,533.1 L774.2,532.5 L775.8,533.5 L777.3,535.2 L778.9,536.0 L780.5,536.8 L782.0,538.0 L783.6,536.3 L785.2,537.2 L786.7,538.9 L788.3,538.4 L789.8,536.9 L791.4,534.9 L793.0,537.2 L794.5,536.6 L796.1,536.4 L797.6,536.1 L799.2,536.0 L800.8,538.8 L802.3,539.0 L803.9,537.6 L805.4,537.5 L807.0,539.3 L808.6,537.4 L810.1,535.6 L811.7,539.3" stroke="#c07623" stroke-width="1.3" fill="none" stroke-linejoin="round"/><rect x="672.7" y="518.8" width="140.6" height="36.5" rx="4" fill="none" stroke="#6d6f76" stroke-width="1.6"/><rect x="667.9" y="529.3" width="8" height="15.9" fill="#1c1d21" stroke="#6d6f76" stroke-width="1.6"/><rect x="670.7" y="532.5" width="1.2" height="9.5" fill="#6d6f76"/><rect x="672.5" y="532.5" width="1.2" height="9.5" fill="#6d6f76"/><rect x="808.7" y="529.3" width="8" height="15.9" fill="#1c1d21" stroke="#6d6f76" stroke-width="1.6"/><rect x="811.5" y="532.5" width="1.2" height="9.5" fill="#6d6f76"/><rect x="813.3" y="532.5" width="1.2" height="9.5" fill="#6d6f76"/>
<rect x="877.5" y="112.5" width="1.2" height="456" fill="#2a2b30"/>
</svg>
</body></html>
